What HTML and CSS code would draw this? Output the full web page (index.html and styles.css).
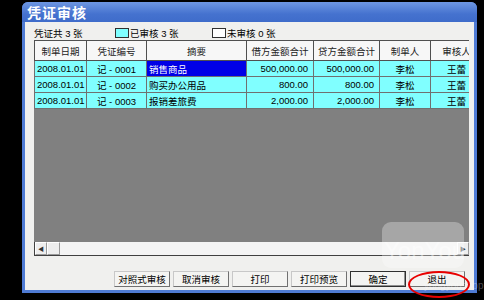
FILE: index.html
```html
<!DOCTYPE html>
<html lang="zh-CN">
<head>
    <meta charset="UTF-8">
    <title>凭证审核</title>
    <link rel="stylesheet" href="styles.css">
</head>
<body>
    <div class="window">
        <div class="titlebar">凭证审核</div>
        <div class="content">
            <div class="summary">
                <span class="total">凭证共 3 张</span>
                <span class="legend legend-checked"><i class="swatch checked"></i>已审核 3 张</span>
                <span class="legend"><i class="swatch"></i>未审核 0 张</span>
            </div>

            <div class="grid">
                <div class="grid-view">
                    <table>
                        <colgroup>
                            <col style="width:52px">
                            <col style="width:60px">
                            <col style="width:100px">
                            <col style="width:67px">
                            <col style="width:66px">
                            <col style="width:51px">
                            <col style="width:52px">
                        </colgroup>
                        <thead>
                            <tr>
                                <th>制单日期</th>
                                <th>凭证编号</th>
                                <th>摘要</th>
                                <th>借方金额合计</th>
                                <th>贷方金额合计</th>
                                <th>制单人</th>
                                <th>审核人</th>
                            </tr>
                        </thead>
                        <tbody>
                            <tr>
                                <td>2008.01.01</td>
                                <td class="c">记 - 0001</td>
                                <td class="selected">销售商品</td>
                                <td class="r">500,000.00</td>
                                <td class="r">500,000.00</td>
                                <td class="c">李松</td>
                                <td class="c">王蕾</td>
                            </tr>
                            <tr>
                                <td>2008.01.01</td>
                                <td class="c">记 - 0002</td>
                                <td>购买办公用品</td>
                                <td class="r">800.00</td>
                                <td class="r">800.00</td>
                                <td class="c">李松</td>
                                <td class="c">王蕾</td>
                            </tr>
                            <tr>
                                <td>2008.01.01</td>
                                <td class="c">记 - 0003</td>
                                <td>报销差旅费</td>
                                <td class="r">2,000.00</td>
                                <td class="r">2,000.00</td>
                                <td class="c">李松</td>
                                <td class="c">王蕾</td>
                            </tr>
                        </tbody>
                    </table>
                </div>
                <div class="hscroll">
                    <div class="arrow">&#9664;</div>
                    <div class="thumb"></div>
                    <div class="track"></div>
                    <div class="arrow">&#9654;</div>
                </div>
            </div>

            <div class="buttons">
                <button>对照式审核</button>
                <button>取消审核</button>
                <button>打印</button>
                <button>打印预览</button>
                <button class="default">确定</button>
                <button>退出</button>
            </div>
        </div>
    </div>

    <div class="watermark"><span>YonYou</span></div>
    <div class="watermark-url">yongyoushop.com</div>
    <div class="circle-mark"></div>
</body>
</html>
```

FILE: styles.css
```css
body {
    margin: 0;
    width: 484px;
    height: 300px;
    background: #000;
    overflow: hidden;
    font-family: "Liberation Sans", "Noto Sans CJK SC", sans-serif;
    font-size: 9.5px;
    color: #000;
}

.window {
    margin: 2px 0 0 22px;
    width: 455px;
    height: 291px;
    display: flex;
    flex-direction: column;
    background: #4f7bd4;
    border-radius: 6px 6px 0 0;
    box-sizing: border-box;
    padding: 0 3px 3px 3px;
}

.titlebar {
    height: 20px;
    line-height: 21px;
    margin: 0 -3px;
    padding-left: 5px;
    border-radius: 6px 6px 0 0;
    background: linear-gradient(#6e97e2, #4572cf 60%, #3f6cca);
    color: #fff;
    font-family: "Noto Sans CJK SC", sans-serif;
    font-size: 14px;
    font-weight: bold;
    letter-spacing: 1px;
}

.content {
    flex: 1;
    background: #f0f0ee;
    padding: 0 5px 0 9px;
    display: flex;
    flex-direction: column;
}

.summary {
    height: 15px;
    display: flex;
    align-items: center;
    padding-top: 3px;
}

.total {
    width: 81px;
}

.legend {
    display: flex;
    align-items: center;
}

.legend-checked {
    width: 97px;
}

.swatch {
    width: 12px;
    height: 8px;
    border: 1px solid #303030;
    background: #fff;
    margin-right: 1px;
}

.swatch.checked {
    background: #80ffff;
}

.grid {
    height: 216px;
    width: 435px;
    background: #808080;
    box-sizing: border-box;
    border-bottom: 1px solid #404040;
    display: flex;
    flex-direction: column;
}

.grid-view {
    flex: 1;
    overflow: hidden;
}

table {
    table-layout: fixed;
    border-collapse: collapse;
    width: 448px;
}

th,
td {
    border: 1px solid #707070;
    padding: 0 2px;
    white-space: nowrap;
    overflow: hidden;
}

th {
    height: 19px;
    background: #f7f7f7;
    font-weight: normal;
    text-align: center;
    color: #222;
    border-color: #505050;
}

td {
    height: 15px;
    background: #80ffff;
}

td.c {
    text-align: center;
}

td.r {
    text-align: right;
    padding-right: 5px;
}

td.selected {
    background: #0000e6;
    color: #fff;
}

.hscroll {
    height: 13px;
    display: flex;
    background: #f4f4f4;
    border-left: 1px solid #404040;
}

.arrow {
    width: 12px;
    font-size: 6px;
    line-height: 13px;
    text-align: center;
    color: #333;
    background: #eeeeee;
    border: 1px solid #fff;
    border-right-color: #999;
    border-bottom-color: #999;
    box-sizing: border-box;
}

.thumb {
    width: 13px;
    background: #eeeeee;
    border: 1px solid #fff;
    border-right-color: #999;
    border-bottom-color: #999;
    box-sizing: border-box;
}

.track {
    flex: 1;
}

.buttons {
    display: flex;
    justify-content: flex-end;
    gap: 3px;
    margin-top: 15px;
    padding-right: 4px;
}

.buttons button {
    width: 56px;
    height: 16px;
    padding: 0;
    font-family: "Noto Sans CJK SC", sans-serif;
    font-size: 9.5px;
    color: #000;
    background: #f4f4f2;
    border: 1px solid #c8c8c8;
    border-right-color: #707070;
    border-bottom-color: #707070;
}

.buttons button.default {
    border: 1px solid #303030;
    box-shadow: inset -1px -1px 0 #909090;
}

.watermark {
    position: absolute;
    left: 382px;
    top: 222px;
    width: 82px;
    height: 46px;
    border-radius: 9px;
    background: rgba(255, 255, 255, 0.3);
    overflow: hidden;
}

.watermark span {
    position: absolute;
    left: 2px;
    top: 15px;
    font-family: "Liberation Sans", sans-serif;
    font-size: 24px;
    color: rgba(255, 255, 255, 0.45);
}

.watermark-url {
    position: absolute;
    left: 424px;
    top: 280px;
    font-size: 10px;
    color: rgba(255, 255, 255, 0.3);
}

.circle-mark {
    position: absolute;
    left: 408px;
    top: 271px;
    width: 58px;
    height: 23px;
    border: 2px solid #e80000;
    border-radius: 50%;
}
```
